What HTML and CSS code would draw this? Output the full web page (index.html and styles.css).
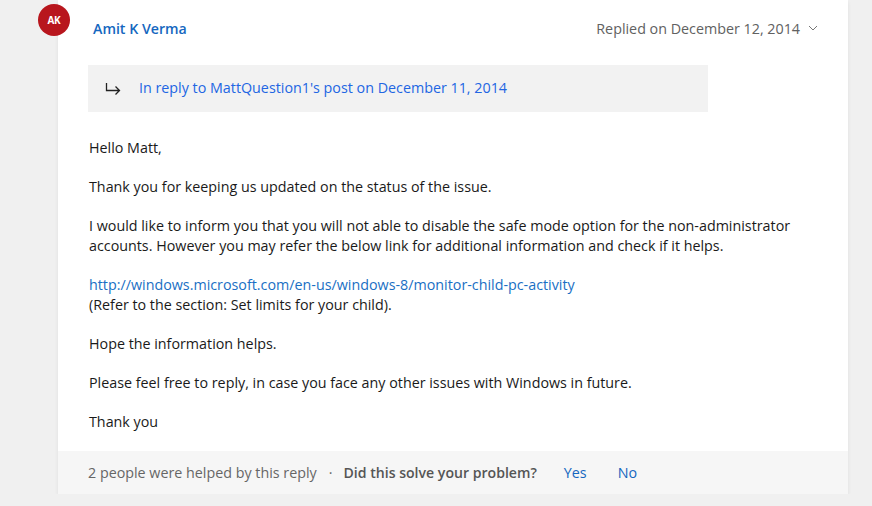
FILE: index.html
```html
<!DOCTYPE html>
<html lang="en">
<head>
<meta charset="utf-8">
<link rel="stylesheet" href="styles.css">
</head>
<body>
<div class="page">
  <article class="card">
    <div class="avatar">AK</div>
    <header class="head">
      <a class="author" href="#">Amit K Verma</a>
      <div class="date">Replied on December 12, 2014
        <svg class="chev" width="10" height="6" viewBox="0 0 10 6"><path d="M1 1l4 4 4-4" fill="none" stroke="#777" stroke-width="1"/></svg>
      </div>
    </header>
    <div class="replyto">
      <svg class="arrow" width="16" height="14" viewBox="0 0 16 14"><path d="M1.5 1v7.5h13M10.5 4.5l4 4-4 4" fill="none" stroke="#222" stroke-width="1.3"/></svg>
      <a href="#" class="replylink">In reply to MattQuestion1's post on December 11, 2014</a>
    </div>
    <div class="body">
      <p>Hello Matt,</p>
      <p>Thank you for keeping us updated on the status of the issue.</p>
      <p>I would like to inform you that you will not able to disable the safe mode option for the non-administrator accounts. However you may refer the below link for additional information and check if it helps.</p>
      <p><a href="#" class="link">http://windows.microsoft.com/en-us/windows-8/monitor-child-pc-activity</a><br>(Refer to the section: Set limits for your child).</p>
      <p>Hope the information helps.</p>
      <p>Please feel free to reply, in case you face any other issues with Windows in future.</p>
      <p>Thank you</p>
    </div>
    <footer class="foot">
      <span class="helped">2 people were helped by this reply</span>
      <span class="dot">·</span>
      <span class="question">Did this solve your problem?</span>
      <a href="#" class="vote">Yes</a>
      <a href="#" class="vote">No</a>
    </footer>
  </article>
</div>
</body>
</html>
```
FILE: styles.css
```css
html, body {
  margin: 0;
  padding: 0;
}
body {
  background: #f0f0f0;
  font-family: "Open Sans", "Noto Sans", sans-serif;
  font-size: 14.3px;
  color: #1a1a1a;
}
a { text-decoration: none; }
.page {
  padding-left: 58px;
}
.card {
  position: relative;
  width: 790px;
  background: #fff;
  box-shadow: 0 2px 4px rgba(0,0,0,0.07);
}
.avatar {
  position: absolute;
  left: -20px;
  top: 4px;
  width: 32px;
  height: 32px;
  border-radius: 50%;
  background: #b8161d;
  color: #fff;
  font-size: 10px;
  font-weight: 700;
  display: flex;
  align-items: center;
  justify-content: center;
  letter-spacing: -0.2px;
}
.head {
  display: flex;
  justify-content: space-between;
  align-items: center;
  height: 56px;
  padding: 0 30px 0 35px;
}
.author {
  color: #1567c0;
  font-size: 14.2px;
  font-weight: 600;
}
.date {
  color: #616161;
  font-size: 14.3px;
  display: flex;
  align-items: center;
  gap: 8px;
  padding-left: 3px;
}
.replyto {
  margin: 9px 0 0 30px;
  width: 620px;
  height: 47px;
  background: #f2f2f2;
  display: flex;
  align-items: center;
  padding-left: 17px;
  box-sizing: border-box;
  gap: 18px;
}
.replylink {
  color: #2266e3;
  font-size: 14.3px;
  position: relative;
  top: -1px;
}
.body {
  padding: 26px 40px 0 31px;
  line-height: 19.5px;
}
.body p {
  margin: 0 0 19.7px;
}
.link {
  color: #1a6fc4;
}
.foot {
  height: 43px;
  background: #f6f6f6;
  display: flex;
  align-items: center;
  padding-left: 30px;
  color: #666;
  font-size: 14.3px;
}
.dot { margin: 0 11px 0 12px; }
.question {
  font-weight: 600;
  color: #555;
  font-size: 14.1px;
}
.vote {
  color: #1567c0;
  margin-left: 27px;
}
.vote + .vote { margin-left: 31px; }
```
